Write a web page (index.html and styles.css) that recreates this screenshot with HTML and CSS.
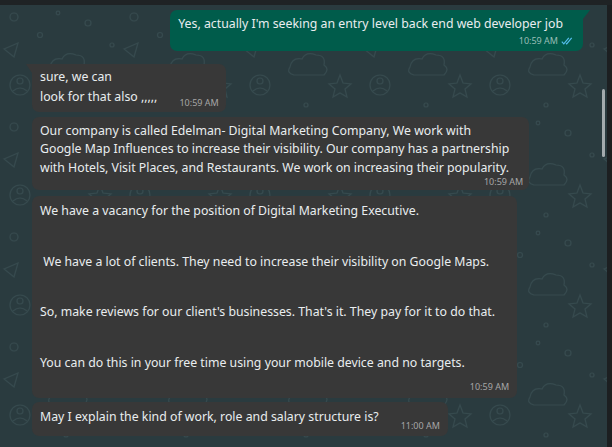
FILE: index.html
```html
<!DOCTYPE html>
<html>
<head>
<meta charset="utf-8">
<link rel="stylesheet" href="styles.css">
</head>
<body>
<div class="topbar"></div>
<div class="main">
  <div class="chat">
    <svg class="doodles" width="607" height="442" aria-hidden="true">
      <defs>
        <pattern id="dp" width="120" height="110" patternUnits="userSpaceOnUse">
          <g fill="none" stroke="#364a4e" stroke-width="1.2">
            <circle cx="14" cy="12" r="4"/>
            <circle cx="40" cy="30" r="2.5"/>
            <circle cx="88" cy="18" r="3"/>
            <path d="M50 62 q2 -10 12 -8 q4 -8 14 -4 q10 0 8 10 q6 4 0 10 h-30 q-8 -2 -4 -8z"/>
            <path d="M100 70 l3 8 l8 1 l-6 5 l2 8 l-7 -4 l-7 4 l2 -8 l-6 -5 l8 -1z"/>
            <circle cx="20" cy="80" r="10"/>
            <circle cx="20" cy="76" r="3"/>
            <path d="M13 86 q7 -6 14 0"/>
            <circle cx="66" cy="100" r="2"/>
            <circle cx="112" cy="40" r="2"/>
            <circle cx="58" cy="8" r="1.8"/>
            <path d="M4 44 l14 -6 l-4 14z"/>
          </g>
        </pattern>
      </defs>
      <rect width="607" height="442" fill="url(#dp)"/>
    </svg>
    <div class="row out-row">
      <div class="bubble out">
        <div class="text">Yes, actually I'm seeking an entry level back end web developer job</div>
        <div class="meta"><span class="time">10:59 AM</span><svg class="ticks" width="12" height="8" viewBox="0 0 12 8"><path d="M0.8 4.6 l2 2.2 l5 -6 M5 6.2 l0.7 0.6 l5 -6" fill="none" stroke="#53bdeb" stroke-width="1.2"/></svg></div>
      </div>
    </div>
    <div class="row in-row first">
      <div class="bubble in tail inline-meta b1">
        <div class="text">sure, we can<br>look for that also ,,,,,</div>
        <div class="meta"><span class="time">10:59 AM</span></div>
      </div>
    </div>
    <div class="row in-row">
      <div class="bubble in b2">
        <div class="text">Our company is called Edelman- Digital Marketing Company, We work with<br>Google Map Influences to increase their visibility. Our company has a partnership<br>with Hotels, Visit Places, and Restaurants. We work on increasing their popularity.</div>
        <div class="meta"><span class="time">10:59 AM</span></div>
      </div>
    </div>
    <div class="row in-row">
      <div class="bubble in b3">
        <div class="text paras">
          <p>We have a vacancy for the position of Digital Marketing Executive.</p>
          <p>&nbsp;We have a lot of clients. They need to increase their visibility on Google Maps.</p>
          <p>So, make reviews for our client's businesses. That's it. They pay for it to do that.</p>
          <p>You can do this in your free time using your mobile device and no targets.</p>
        </div>
        <div class="meta"><span class="time">10:59 AM</span></div>
      </div>
    </div>
    <div class="row in-row">
      <div class="bubble in inline-meta b4">
        <div class="text">May I explain the kind of work, role and salary structure is?</div>
        <div class="meta"><span class="time">11:00 AM</span></div>
      </div>
    </div>
    <div class="scrollbar"></div>
  </div>
  <div class="edge"></div>
</div>
</body>
</html>
```
FILE: styles.css
```css
* { box-sizing: border-box; }
html, body { margin: 0; padding: 0; }
body {
  width: 612px;
  height: 447px;
  overflow: hidden;
  background: #2a3b3f;
  font-family: "Noto Sans", "Open Sans", sans-serif;
  color: #e9edef;
}
.topbar { height: 5px; background: #1f2325; }
.main { display: flex; height: 442px; }
.chat {
  position: relative;
  flex: 1;
  display: flex;
  flex-direction: column;
  padding: 5px 0 0 32px;
  overflow: hidden;
}
.doodles { position: absolute; left: 0; top: 0; }
.edge { width: 5px; background: #1c1f21; }
.row { position: relative; display: flex; }
.out-row { justify-content: flex-end; padding-right: 24px; }
.first { margin-top: 13px; }
.b2 { margin-top: 5px; }
.b3 { margin-top: 6px; }
.b4 { margin-top: 4px; }
.bubble {
  position: relative;
  border-radius: 7px;
  padding: 5px 6px 2px 8px;
  font-size: 12.3px;
  line-height: 18.5px;
  white-space: nowrap;
}
.bubble .text { padding-right: 14px; }
.out { background: #005c4b; border-top-right-radius: 0; padding: 5px 10px 4px 8px; }
.out .text { padding-right: 10px; }
.out .meta { margin-top: 1px; }
.out::after {
  content: "";
  position: absolute;
  top: 0; right: -7px;
  border-top: 9px solid #005c4b;
  border-right: 7px solid transparent;
}
.in { background: #383838; }
.in.tail { border-top-left-radius: 0; }
.in.tail::before {
  content: "";
  position: absolute;
  top: 0; left: -6px;
  border-top: 9px solid #383838;
  border-left: 6px solid transparent;
}
.meta {
  display: flex;
  justify-content: flex-end;
  align-items: center;
  gap: 3px;
  font-size: 9px;
  line-height: 12px;
  margin-top: -1px;
}
.time { color: #a6a6a6; }
.out .time { color: #99beb6; }
.ticks { display: block; }
.inline-meta { display: flex; align-items: flex-end; }
.inline-meta .text { padding-right: 22px; }
.b1 { padding: 3px 7px 5px 8px; line-height: 20px; }
.b1 .meta { margin-bottom: -2px; }
.b3 { padding: 6px 8px 5px 8px; }
.b3 .meta { margin-top: 9px; }
.b4 { padding: 6px 8px 9px 8px; }
.b4 .meta { margin-bottom: -5px; }
.paras p { margin: 0; }
.paras p + p { margin-top: 32px; }
.scrollbar {
  position: absolute;
  right: 2px; top: 84px;
  width: 3px; height: 68px;
  border-radius: 2px;
  background: #a3aaad;
}
```
